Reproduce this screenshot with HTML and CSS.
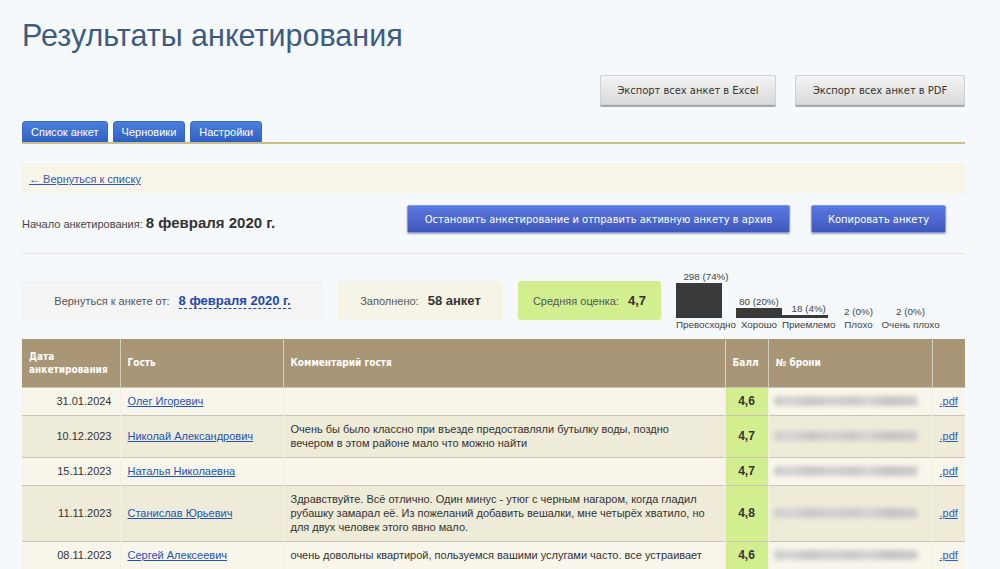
FILE: index.html
```html
<!DOCTYPE html>
<html lang="ru">
<head>
<meta charset="utf-8">
<title>Результаты анкетирования</title>
<link rel="stylesheet" href="styles.css">
</head>
<body>
<div class="page">
  <h1 class="title">Результаты анкетирования</h1>

  <div class="export-row">
    <button class="btn-gray btn-excel">Экспорт всех анкет в Excel</button>
    <button class="btn-gray btn-pdf">Экспорт всех анкет в PDF</button>
  </div>

  <div class="tabs">
    <a class="tab" href="#">Список анкет</a>
    <a class="tab" href="#">Черновики</a>
    <a class="tab" href="#">Настройки</a>
  </div>

  <div class="backbar">
    <a class="back-link" href="#">← Вернуться к списку</a>
  </div>

  <div class="start-row">
    <div class="start-text">Начало анкетирования: <span class="start-date">8 февраля 2020 г.</span></div>
    <div class="start-actions">
      <button class="btn-blue btn-stop">Остановить анкетирование и отправить активную анкету в архив</button>
      <button class="btn-blue btn-copy">Копировать анкету</button>
    </div>
  </div>

  <div class="stats-row">
    <div class="stat stat-return">
      <span class="stat-label">Вернуться к анкете от:</span>
      <a class="stat-link" href="#">8 февраля 2020 г.</a>
    </div>
    <div class="stat stat-filled">
      <span class="stat-label">Заполнено:</span>
      <span class="stat-value">58 анкет</span>
    </div>
    <div class="stat stat-avg">
      <span class="stat-label">Средняя оценка:</span>
      <span class="stat-value">4,7</span>
    </div>
    <div class="chart">
      <div class="chart-col">
        <div class="chart-num">298 (74%)</div>
        <div class="chart-bar" style="height:35px"></div>
        <div class="chart-name">Превосходно</div>
      </div>
      <div class="chart-col">
        <div class="chart-num">80 (20%)</div>
        <div class="chart-bar" style="height:10px"></div>
        <div class="chart-name">Хорошо</div>
      </div>
      <div class="chart-col">
        <div class="chart-num">18 (4%)</div>
        <div class="chart-bar" style="height:3px"></div>
        <div class="chart-name">Приемлемо</div>
      </div>
      <div class="chart-col">
        <div class="chart-num">2 (0%)</div>
        <div class="chart-bar" style="height:0px"></div>
        <div class="chart-name">Плохо</div>
      </div>
      <div class="chart-col">
        <div class="chart-num">2 (0%)</div>
        <div class="chart-bar" style="height:0px"></div>
        <div class="chart-name">Очень плохо</div>
      </div>
    </div>
  </div>

  <table class="results">
    <colgroup>
      <col class="c-date"><col class="c-guest"><col class="c-comment"><col class="c-score"><col class="c-booking"><col class="c-pdf">
    </colgroup>
    <thead>
      <tr>
        <th>Дата анкетирования</th>
        <th>Гость</th>
        <th>Комментарий гостя</th>
        <th>Балл</th>
        <th>№ брони</th>
        <th></th>
      </tr>
    </thead>
    <tbody>
      <tr class="odd">
        <td class="date">31.01.2024</td>
        <td><a class="guest" href="#">Олег Игоревич</a></td>
        <td class="comment"></td>
        <td class="score">4,6</td>
        <td class="booking"><div class="blur"></div></td>
        <td class="pdf"><a href="#">.pdf</a></td>
      </tr>
      <tr class="even">
        <td class="date">10.12.2023</td>
        <td><a class="guest" href="#">Николай Александрович</a></td>
        <td class="comment">Очень бы было классно при въезде предоставляли бутылку воды, поздно вечером в этом районе мало что можно найти</td>
        <td class="score">4,7</td>
        <td class="booking"><div class="blur"></div></td>
        <td class="pdf"><a href="#">.pdf</a></td>
      </tr>
      <tr class="odd">
        <td class="date">15.11.2023</td>
        <td><a class="guest" href="#">Наталья Николаевна</a></td>
        <td class="comment"></td>
        <td class="score">4,7</td>
        <td class="booking"><div class="blur"></div></td>
        <td class="pdf"><a href="#">.pdf</a></td>
      </tr>
      <tr class="even">
        <td class="date">11.11.2023</td>
        <td><a class="guest" href="#">Станислав Юрьевич</a></td>
        <td class="comment">Здравствуйте. Всё отлично. Один минус - утюг с черным нагаром, когда гладил рубашку замарал её. Из пожеланий добавить вешалки, мне четырёх хватило, но для двух человек этого явно мало.</td>
        <td class="score">4,8</td>
        <td class="booking"><div class="blur"></div></td>
        <td class="pdf"><a href="#">.pdf</a></td>
      </tr>
      <tr class="odd">
        <td class="date">08.11.2023</td>
        <td><a class="guest" href="#">Сергей Алексеевич</a></td>
        <td class="comment">очень довольны квартирой, пользуемся вашими услугами часто. все устраивает</td>
        <td class="score">4,6</td>
        <td class="booking"><div class="blur"></div></td>
        <td class="pdf"><a href="#">.pdf</a></td>
      </tr>
    </tbody>
  </table>
</div>
</body>
</html>
```

FILE: styles.css
```css
* { box-sizing: border-box; }
html, body { margin: 0; padding: 0; }
body {
  background: #f5f9fc;
  font-family: "Liberation Sans", Arial, sans-serif;
  color: #333;
  overflow: hidden;
}
.page { padding: 0 35px 0 22px; }

.title {
  margin: 17px 0 0;
  font-size: 30.5px;
  line-height: 37px;
  font-weight: normal;
  color: #3d5c80;
}

.export-row {
  display: flex;
  justify-content: flex-end;
  gap: 19px;
  margin-top: 21px;
}
.btn-gray, .btn-blue {
  font-family: "DejaVu Sans Condensed", "DejaVu Sans", sans-serif;
  font-stretch: condensed;
  font-size: 11px;
  border-radius: 2px;
  cursor: pointer;
  padding: 0;
}
.btn-gray {
  height: 30px;
  color: #333;
  background: linear-gradient(#f4f4f4, #dadada);
  border: 1px solid #d0d0d0;
  box-shadow: 0 2px 0 #a9a9a9;
}
.btn-excel { width: 176px; }
.btn-pdf { width: 170px; }

.tabs {
  display: flex;
  gap: 5px;
  margin-top: 16px;
  border-bottom: 2px solid #c9be8c;
}
.tab {
  display: block;
  height: 21px;
  line-height: 20px;
  padding: 0 8px;
  font-size: 11px;
  color: #fff;
  text-decoration: none;
  background: linear-gradient(#4a80dc, #2f5fc2);
  border: 1px solid #3a67c6;
  border-bottom: none;
  border-radius: 4px 4px 0 0;
}

.backbar {
  margin-top: 19px;
  height: 30px;
  background: #f7f5e7;
  padding-left: 7px;
  display: flex;
  align-items: center;
}
.back-link {
  font-size: 11px;
  color: #3656b0;
  padding-top: 2px;
}

.start-row {
  display: flex;
  align-items: center;
  padding: 12px 19px 20px 0;
  border-bottom: 1px solid #ebe6d3;
}
.start-text {
  font-size: 11px;
  color: #444;
  padding-top: 6px;
}
.start-date {
  font-size: 15px;
  font-weight: bold;
  color: #333;
}
.start-actions {
  margin-left: auto;
  display: flex;
  gap: 21px;
}
.btn-blue {
  height: 28px;
  color: #fff;
  background: linear-gradient(#5a79e2, #4057ba);
  border: 1px solid #8197e6;
  box-shadow: 0 1px 2px rgba(0,0,0,0.35);
}
.btn-stop { width: 383px; }
.btn-copy { width: 135px; }

.stats-row {
  display: flex;
  align-items: center;
  gap: 15px;
  padding-top: 16px;
}
.stat {
  height: 39px;
  border-radius: 3px;
  display: flex;
  align-items: center;
  justify-content: center;
  gap: 9px;
}
.stat-label { font-size: 11px; color: #555; }
.stat-value { font-size: 13px; font-weight: bold; color: #333; }
.stat-return { width: 301px; background: #f4f4f4; }
.stat-filled { width: 165px; background: #f6f4e6; }
.stat-avg { width: 143px; background: #d3ee8f; }
.stat-link {
  font-size: 13px;
  font-weight: bold;
  color: #1f48b0;
  text-decoration: none;
  border-bottom: 1px dashed #1f48b0;
  line-height: 15px;
}

.chart {
  display: flex;
  align-items: flex-end;
  gap: 0;
}
.chart-col {
  min-width: 46px;
  display: flex;
  flex-direction: column;
  align-items: flex-start;
  font-size: 9.8px;
  color: #444;
}
.chart-num, .chart-name {
  align-self: stretch;
  text-align: center;
  line-height: 13px;
  white-space: nowrap;
}
.chart-bar {
  width: 46px;
  background: #3a3a3a;
}

.results {
  margin-top: 8px;
  width: 943px;
  table-layout: fixed;
  border-collapse: collapse;
}
.c-date { width: 98px; }
.c-guest { width: 163px; }
.c-comment { width: 442px; }
.c-score { width: 43px; }
.c-booking { width: 164px; }
.c-pdf { width: 33px; }

.results th {
  background: #a89676;
  color: #fff;
  font-family: "DejaVu Sans Condensed", "DejaVu Sans", sans-serif;
  font-stretch: condensed;
  font-size: 10px;
  font-weight: bold;
  text-align: left;
  height: 48px;
  padding: 0 7px;
  line-height: 13px;
  border-left: 1px solid #d8d0bf;
}
.results th:first-child { border-left: none; }
.results td {
  font-size: 11px;
  line-height: 14px;
  padding: 6px 7px 7px;
  vertical-align: middle;
  border-top: 1px solid #c9c5b6;
  border-left: 1px solid #f3f0e2;
}
.results td:first-child { border-left: none; }
.results tr.odd td { background: #f8f6ea; }
.results tr.even td { background: #eeebd8; }
.results td.date { text-align: right; padding-right: 8px; }
.results td.comment { padding-right: 14px; }
.results tr td.score {
  background: #d3ee8f;
  text-align: center;
  font-weight: bold;
  font-size: 12px;
  padding: 0;
}
.guest { color: #2553b3; }
.results td.booking { padding: 0 14px 0 5px; }
.blur {
  height: 10px;
  border-radius: 4px;
  background: linear-gradient(90deg, #cdcdcd 0%, #d6d6d6 12%, #c8c8c8 25%, #d2d2d2 40%, #cacaca 55%, #d5d5d5 65%, #c4c4c4 80%, #cfcfcf 100%);
  filter: blur(2px);
}
.results td.pdf { padding: 0 0 0 7px; font-size: 11px; }
.pdf a { color: #3358c4; }
```
